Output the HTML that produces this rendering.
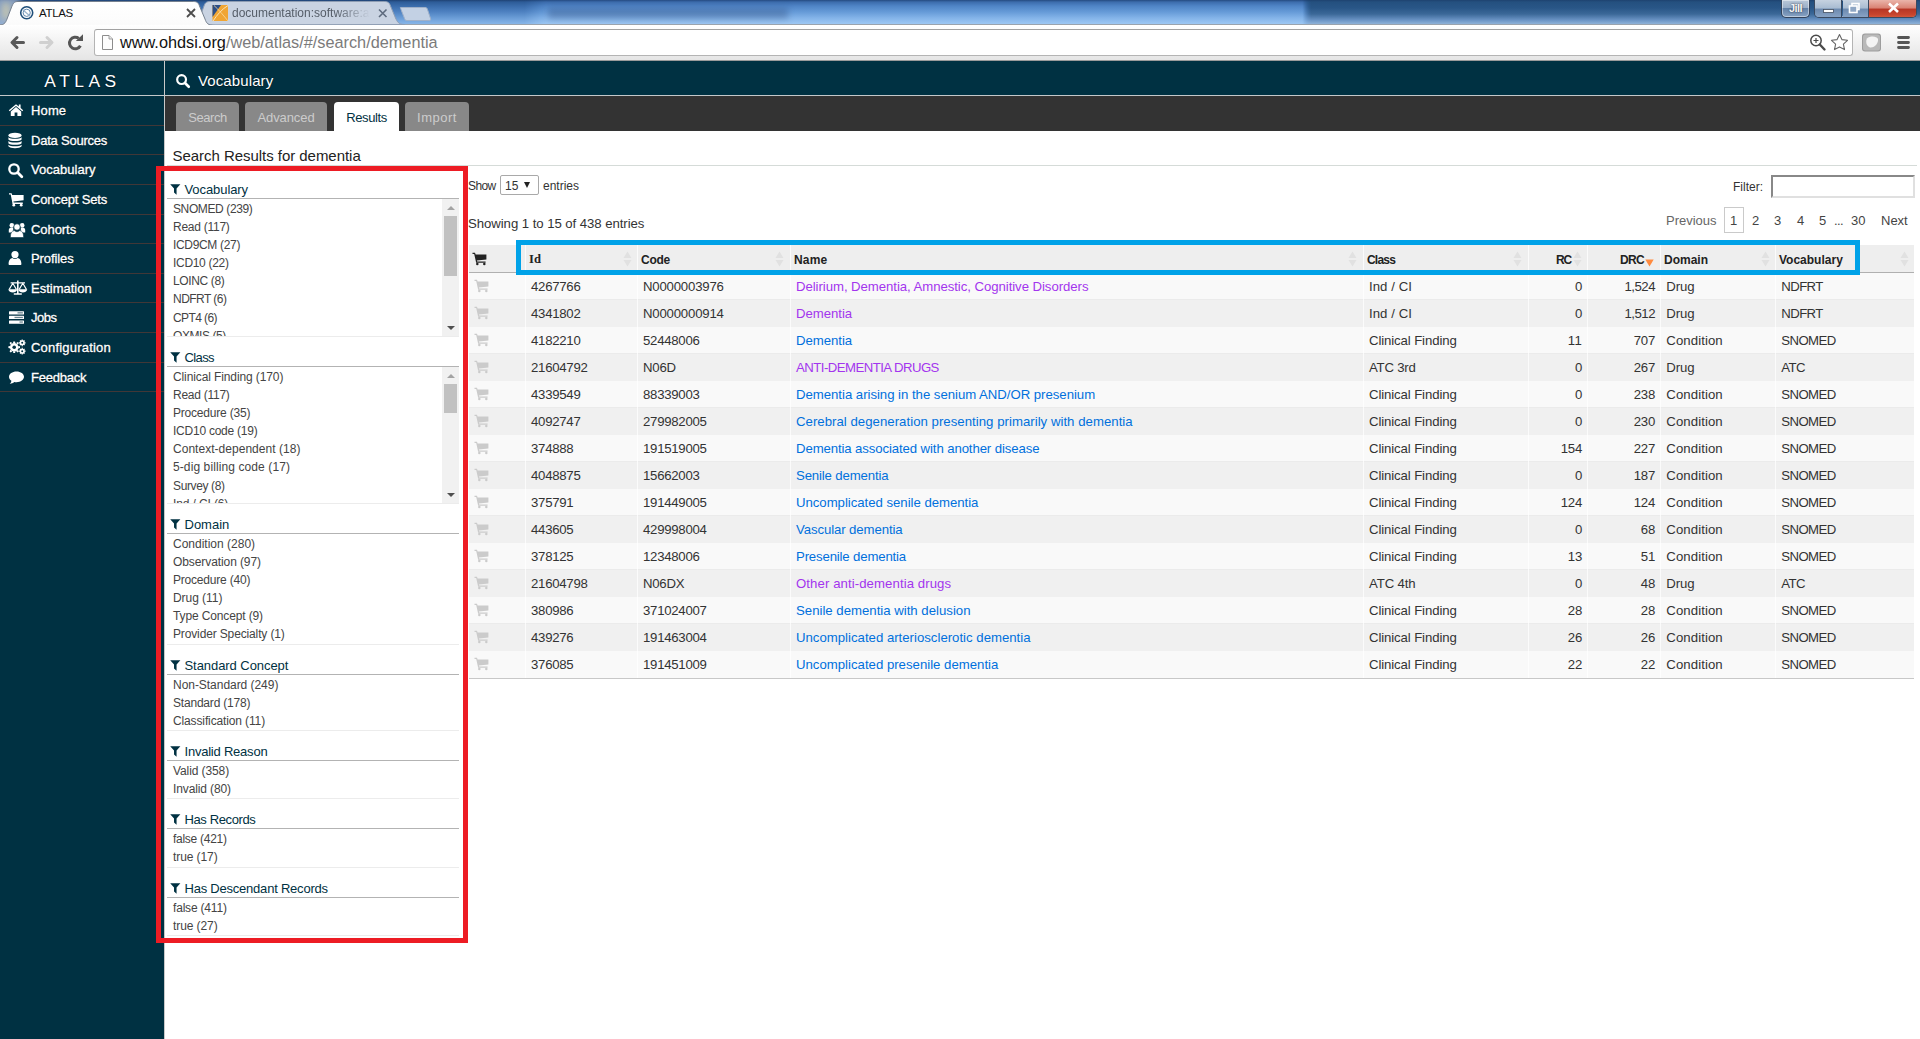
<!DOCTYPE html>
<html lang="en"><head><meta charset="utf-8"><title>ATLAS</title>
<style>
*{box-sizing:border-box}
html,body{margin:0;padding:0}
body{width:1920px;height:1039px;overflow:hidden;position:relative;background:#fff;font-family:"Liberation Sans",sans-serif;color:#333;font-size:13px}
.abs{position:absolute}
svg{display:block}
/* ---------- browser chrome ---------- */
#titlebar{position:absolute;left:0;top:0;width:1920px;height:25px;overflow:hidden;
 background:linear-gradient(to bottom,#1f4273 0px,#2d5c98 2px,#3a6cab 6px,#4f82c2 12px,#6b9dd7 18px,#86b5e8 24px);}
#tbB{position:absolute;left:524px;top:0;width:785px;height:25px;background:linear-gradient(to bottom,#254a80 0px,#3c6cac 2px,#4f84c6 6px,#669bd8 12px,#84b4e9 18px,#9dc7f3 24px);-webkit-mask-image:linear-gradient(to right,transparent 0,#000 22px,#000 778px,transparent 785px);mask-image:linear-gradient(to right,transparent 0,#000 22px,#000 778px,transparent 785px)}
#tbC{position:absolute;left:1303px;top:0;width:617px;height:25px;background:linear-gradient(to bottom,#1e426f 0px,#24507f 2px,#295687 8px,#3b6898 14px,#6a93c4 20px,#8eb2d8 24px);-webkit-mask-image:linear-gradient(to right,transparent 0,#000 8px);mask-image:linear-gradient(to right,transparent 0,#000 8px)}
#titleline{position:absolute;left:0;top:24px;width:1920px;height:1px;background:#9aa3ad}
#toolbar{position:absolute;left:0;top:25px;width:1920px;height:35px;background:linear-gradient(to bottom,#ffffff 0,#f7f7f7 30%,#efefef 60%,#e5e5e5 100%)}
#toolline{position:absolute;left:0;top:60px;width:1920px;height:1px;background:#9b9b9b}
#urlbox{position:absolute;left:94px;top:29px;width:1759px;height:27px;background:#fff;border:1px solid #b4b4b4;border-top-color:#a2a2a2;border-radius:3px}
#urltext{position:absolute;left:120px;top:33px;font-size:16.3px;line-height:19px;color:#7b7b7b;white-space:nowrap}
#urltext b{font-weight:normal;color:#111}
.tabtitle{position:absolute;font-size:12px;line-height:14px;white-space:nowrap}
/* ---------- page ---------- */
#page{position:absolute;left:0;top:61px;width:1920px;height:978px;background:#fff}
#sidebar{position:absolute;left:0;top:0;width:164px;height:978px;background:#003142}
#sideborder{position:absolute;left:164px;top:0;width:1px;height:978px;background:#c9c9c9}
#brand{position:absolute;left:0;top:0;width:164px;height:34px;color:#fff;font-size:17.4px;line-height:41.5px;letter-spacing:4.5px;text-align:center;padding-left:1px;text-shadow:0 1px 2px rgba(0,0,0,.6)}
#brandline{position:absolute;left:0;top:34px;width:1920px;height:1px;background:#c4c8ca}
.nav{position:absolute;left:0;width:164px;height:30px;border-bottom:1px solid #413737;color:#fff;font-size:13px;-webkit-text-stroke:.3px #fff}
.nav span{position:absolute;left:31px;top:0;line-height:29px;white-space:nowrap;text-shadow:0 1px 1px rgba(0,0,0,.5)}
.nav svg{position:absolute;left:7px;top:6px}
#header{position:absolute;left:165px;top:0;width:1755px;height:34px;background:#003142}
#header span{position:absolute;left:33px;top:0;line-height:39px;color:#fff;font-size:15px;text-shadow:0 1px 1px rgba(0,0,0,.5)}
#tabbar{position:absolute;left:165px;top:35px;width:1755px;height:35px;background:#333}
.tab{position:absolute;top:41px;height:29px;background:#888;color:#ccc;border-radius:4px 4px 0 0;font-size:13px;line-height:31px;text-align:center}
.tab.on{background:#fff;color:#003142}
#h3{position:absolute;left:172.5px;top:86px;letter-spacing:-.04px;font-size:15px;line-height:18px;color:#222;white-space:nowrap}
#h3line{position:absolute;left:167px;top:104px;width:1750px;height:1px;background:#d5dbd8}
/* filter panels */
.fh{position:absolute;left:167px;width:292px;height:18px;border-bottom:1px solid #b3b3b3;color:#003142;font-size:13px}
.fh span{position:absolute;left:17.5px;bottom:1px;line-height:15px;white-space:nowrap}
.fh svg{position:absolute;left:3px;bottom:2.700px}
.fl{position:absolute;left:167px;width:292px;border-bottom:1px solid #ececec;overflow:hidden}
.fi{position:absolute;left:6px;font-size:12px;line-height:14px;color:#444;white-space:nowrap}
.sb{position:absolute;right:0;top:0;width:17px;height:100%;background:#f1f1f1}
.sb i{position:absolute;left:2px;width:13px;background:#c1c1c1}
.sb:before{content:"";position:absolute;left:4.500px;top:7px;border:4px solid transparent;border-top:0;border-bottom:4px solid #a3a3a3;width:0;height:0}
.sb:after{content:"";position:absolute;left:4.500px;bottom:6.500px;border:4px solid transparent;border-bottom:0;border-top:4px solid #505050;width:0;height:0}
/* table */
#thead{position:absolute;left:469px;top:184px;width:1445px;height:27px;background:#eee}
#theadline{position:absolute;left:469px;top:211px;width:1445px;height:1px;background:#b0b0b0}
.th{position:absolute;top:184px;height:27px;font-size:12px;font-weight:bold;line-height:31.5px;color:#222;white-space:nowrap}
.row{position:absolute;left:469px;width:1445px;height:27px;overflow:visible;border-top:1px solid #f0f0f0;background:#f9f9f9;font-size:13.2px;line-height:28.3px;color:#333}
.row.e{background:#f0f0f0;border-top-color:#ebebeb}
.row span{position:absolute;top:0;white-space:nowrap}
.row .r{text-align:right}
.row a{color:#0070dd;text-decoration:none}
.row a.v{color:#a335ee}
.vl{position:absolute;top:184px;width:1px;height:433px;background:rgba(255,255,255,.75)}
#tbottom{position:absolute;left:469px;top:617px;width:1445px;height:1px;background:#c8c8c8}
.ctl{position:absolute;font-size:12px;line-height:14px;color:#333;white-space:nowrap}
.pg{position:absolute;top:152px;font-size:13px;line-height:15px;color:#444;white-space:nowrap}
#redbox{position:absolute;left:156px;top:105px;width:312px;height:777px;border:5px solid #ed1c24}
#bluebox{position:absolute;left:516px;top:179px;width:1344px;height:35px;border:5px solid #00a2e8}

</style></head>
<body>
<div id="titlebar"></div>
<div id="tbB"></div><div id="tbC"></div><div class="abs" style="left:548px;top:8px;width:240px;height:11px;background:rgba(35,60,105,.30);filter:blur(3px)"></div><div class="abs" style="left:-6px;top:-4px;width:26px;height:30px;background:rgba(150,170,200,.85);filter:blur(3px)"></div><div class="abs" style="left:2px;top:3px;width:8px;height:16px;background:rgba(200,200,175,.9);filter:blur(3px)"></div>
<div id="titleline"></div>
<svg class="abs" style="left:0;top:0" width="440" height="26" viewBox="0 0 440 26">
  <defs><linearGradient id="tg" x1="0" y1="0" x2="0" y2="1"><stop offset="0" stop-color="#ffffff"/><stop offset="1" stop-color="#fbfbfb"/></linearGradient></defs>
  <path d="M191,25 C197,25 198,22 199.500,18 L204,6 C205,2.500 207,1.500 210,1.500 L384.500,1.500 C387.500,1.500 389.500,2.500 390.500,6 L395.500,18 C397.500,22 398.500,24.500 404.500,24.500 Z" fill="#c9d3e2" stroke="#8e9db3" stroke-width="1"/>
  <path d="M400.500,7.500 L425,7.500 C426.500,7.500 427,8 427.500,9.500 L430.500,18.500 C431,20 430.500,20.500 429,20.500 L407,20.500 C405.500,20.500 405,20 404.500,18.500 L401,9.500 C400.500,8 400,7.500 400.500,7.500 Z" fill="#c3d1e4" stroke="#9fb0c8" stroke-width="1"/>
  <path d="M-4,25.500 C4,25.500 5.500,23 7,19 L12,6 C13.500,2.500 15,1.500 18,1.500 L193.500,1.500 C196.500,1.500 198.500,2.500 199.500,6 L205,19 C206.500,23 207.500,25.500 215.500,25.500 Z" fill="url(#tg)" stroke="#76818f" stroke-width="1"/>
  <rect x="0" y="25" width="217" height="1" fill="#fdfdfd"/>
  <!-- favicon 1 -->
  <circle cx="26.700" cy="12.800" r="6" fill="#fff" stroke="#1f4e79" stroke-width="1.600"/>
  <circle cx="26.700" cy="12.800" r="3.600" fill="none" stroke="#5f86ad" stroke-width="1"/>
  <path d="M22.500,9.500 L30.500,16.500" stroke="#9bb4cc" stroke-width="1.200"/>
  <!-- close 1 -->
  <path d="M187,9 L195,17 M195,9 L187,17" stroke="#4d4d4d" stroke-width="1.800"/>
  <!-- favicon 2 -->
  <rect x="212.500" y="5" width="15.500" height="16" fill="#f0a533"/>
  <path d="M212.500,5 L221,5 L212.500,17 Z" fill="#2d4f86"/>
  <path d="M213,21 C217,15 222,9 228,5.500" stroke="#fbe3b4" stroke-width="1" fill="none"/>
  <path d="M214,5.500 C219,10 224,16 228,21" stroke="#f7d9a0" stroke-width=".8" fill="none"/>
  <!-- close 2 -->
  <path d="M379,9.500 L386.500,17 M386.500,9.500 L379,17" stroke="#5e6b7e" stroke-width="1.600"/>
</svg>
<div class="tabtitle" style="left:39px;top:6px;color:#111;font-size:11.500px;letter-spacing:-.35px">ATLAS</div>
<div class="tabtitle" style="left:232px;top:6px;width:138px;overflow:hidden;color:#555d68;-webkit-mask-image:linear-gradient(to right,#000 75%,transparent 100%);mask-image:linear-gradient(to right,#000 75%,transparent 100%)">documentation:software:atlas</div>
<!-- window buttons -->
<div class="abs" style="left:1781px;top:0;width:29px;height:18px;border:1px solid #33425a;border-top:0;border-radius:0 0 5px 5px;background:linear-gradient(to bottom,#b9c7d8 0,#9cb0c9 45%,#6482a8 50%,#88a3c4 100%);box-shadow:inset 0 0 0 1px rgba(255,255,255,.45)"></div>
<div class="abs" style="left:1789px;top:2px;font-size:11px;line-height:13px;color:#f4f4f4;font-weight:bold;letter-spacing:-.6px;text-shadow:0 0 2px #223">Jill</div>
<div class="abs" style="left:1814px;top:0;width:103px;height:18px;border:1px solid #3b4a60;border-top:0;border-radius:0 0 5px 5px;overflow:hidden;box-shadow:inset 0 0 0 1px rgba(255,255,255,.4)">
  <div class="abs" style="left:0;top:0;width:27px;height:18px;background:linear-gradient(to bottom,#c6d2e0 0,#a9bcd2 45%,#6c89ae 50%,#8ca6c7 100%);border-right:1px solid #3b4a60"></div>
  <div class="abs" style="left:28px;top:0;width:26px;height:18px;background:linear-gradient(to bottom,#c6d2e0 0,#a9bcd2 45%,#6c89ae 50%,#8ca6c7 100%);border-right:1px solid #3b4a60"></div>
  <div class="abs" style="left:54px;top:0;width:49px;height:18px;background:linear-gradient(to bottom,#eab5aa 0,#d98172 45%,#b63625 50%,#c8442d 80%,#d75d3f 100%)"></div>
</div>
<svg class="abs" style="left:1814px;top:0" width="104" height="18" viewBox="0 0 104 18">
  <rect x="9.500" y="9.500" width="10" height="3" fill="#fff" stroke="#444f60" stroke-width=".8"/>
  <rect x="38" y="3.500" width="7" height="6" fill="none" stroke="#fff" stroke-width="1.600"/>
  <rect x="35.500" y="6" width="7.500" height="6.500" fill="#8ea6c4" stroke="#fff" stroke-width="1.600"/>
  <path d="M75,3.500 L84,12 M84,3.500 L75,12" stroke="#fff" stroke-width="2.600"/>
</svg>
<div id="toolbar"></div>
<div id="toolline"></div>
<div id="urlbox"></div>
<svg class="abs" style="left:0;top:25px" width="130" height="35" viewBox="0 0 130 35">
  <!-- back -->
  <path d="M23.500,17.500 L13.500,17.500 M17,12.500 L12,17.500 L17,22.500" fill="none" stroke="#595959" stroke-width="3" stroke-linecap="round" stroke-linejoin="round"/>
  <!-- forward -->
  <path d="M40.500,17.500 L50.500,17.500 M47,12.500 L52,17.500 L47,22.500" fill="none" stroke="#d0d0d0" stroke-width="3" stroke-linecap="round" stroke-linejoin="round"/>
  <!-- reload -->
  <path d="M80.400,20.800 A5.800,5.800 0 1 1 78.800,13.400" fill="none" stroke="#555" stroke-width="3"/>
  <path d="M75.800,16 L83,16 L83,9.200 Z" fill="#555"/>
  <!-- page icon -->
  <path d="M102.500,10.500 L109,10.500 L112.500,14 L112.500,24.500 L102.500,24.500 Z" fill="#fdfdfd" stroke="#8d8d8d" stroke-width="1"/>
  <path d="M109,10.500 L109,14 L112.500,14" fill="#e8e8e8" stroke="#8d8d8d" stroke-width=".8"/>
</svg>
<div id="urltext"><b>www.ohdsi.org</b>/web/atlas/#/search/dementia</div>
<svg class="abs" style="left:1800px;top:25px" width="120" height="35" viewBox="0 0 120 35">
  <!-- zoom -->
  <circle cx="16" cy="15.500" r="5.200" fill="none" stroke="#4a4a4a" stroke-width="1.500"/>
  <path d="M19.800,19.500 L24.500,24.500" stroke="#4a4a4a" stroke-width="2.400" stroke-linecap="round"/>
  <path d="M13.500,15.500 L18.500,15.500 M16,13 L16,18" stroke="#4a4a4a" stroke-width="1.200"/>
  <!-- star -->
  <path d="M39.500,9.500 L41.900,14.600 L47.500,15.300 L43.400,19.100 L44.500,24.600 L39.500,21.900 L34.500,24.600 L35.600,19.100 L31.500,15.300 L37.100,14.600 Z" fill="#fff" stroke="#666" stroke-width="1.100" stroke-linejoin="round"/>
  <!-- ext -->
  <rect x="62" y="8.500" width="19" height="18" rx="3" fill="#9d9d9d"/>
  <rect x="63" y="9.500" width="17" height="16" rx="2.500" fill="#b9b9b9"/>
  <path d="M67,13.500 C70,10.500 77,11 78,14 C78.500,18 75,23 70,22.500 C66,21 65.500,16 67,13.500 Z" fill="#f4f4f4"/>
  <!-- menu -->
  <path d="M98.500,12.500 L108.500,12.500 M98.500,17.500 L108.500,17.500 M98.500,22.500 L108.500,22.500" stroke="#555" stroke-width="2.800" stroke-linecap="round"/>
</svg>

<div id="page">
<div id="sidebar"></div><div id="sideborder"></div>
<div id="brand">ATLAS</div>
<div class="nav" style="top:35px;height:30px"><svg style="left:8px;top:7px" width="16" height="14" viewBox="0 0 16 14"><path d="M8,1.200 L0.800,7.300 L1.700,8.300 L8,3 L14.300,8.300 L15.200,7.300 L12.600,5.100 L12.600,1.600 L10.800,1.600 L10.800,3.600 Z" fill="#fff"/><path d="M8,4 L2.800,8.400 L2.800,13 L6.600,13 L6.600,9.600 L9.400,9.600 L9.400,13 L13.200,13 L13.200,8.400 Z" fill="#fff"/></svg><span style="letter-spacing:0.13px;">Home</span></div>
<div class="nav" style="top:65px;height:29px"><svg style="left:7px;top:6px" width="16" height="17" viewBox="0 0 16 17"><ellipse cx="8" cy="3.400" rx="6.600" ry="2.600" fill="#fff"/><path d="M1.400,5.200 C3,7.200 13,7.200 14.600,5.200 L14.600,7.400 C13,9.600 3,9.600 1.400,7.400 Z M1.400,9 C3,11 13,11 14.600,9 L14.600,11.200 C13,13.400 3,13.400 1.400,11.200 Z M1.400,12.800 C3,14.800 13,14.800 14.600,12.800 L14.600,14.200 C13,16.800 3,16.800 1.400,14.200 Z" fill="#fff"/></svg><span style="letter-spacing:-0.22px;">Data Sources</span></div>
<div class="nav" style="top:94px;height:30px"><svg style="left:7px;top:7px" width="17" height="17" viewBox="0 0 17 17"><circle cx="7" cy="7" r="4.700" fill="none" stroke="#fff" stroke-width="2.300"/><path d="M10.600,10.600 L14.800,14.800" stroke="#fff" stroke-width="2.800" stroke-linecap="round"/></svg><span style="letter-spacing:0.03px;">Vocabulary</span></div>
<div class="nav" style="top:124px;height:30px"><svg style="left:8px;top:7px" width="17" height="15" viewBox="0 0 17 15"><path d="M1,1.200 L3.600,1.200 L4.200,3 L15.600,3 L15.600,8.200 L5.400,9.400 L5.700,10.600 L14.800,10.600 L14.800,12 L4.400,12 L4.400,11 L2.700,2.600 L1,2.600 Z" fill="#fff"/><circle cx="5.800" cy="13.200" r="1.400" fill="#fff"/><circle cx="13.200" cy="13.200" r="1.400" fill="#fff"/></svg><span style="letter-spacing:-0.16px;">Concept Sets</span></div>
<div class="nav" style="top:154px;height:29px"><svg style="left:8px;top:7px" width="18" height="16" viewBox="0 0 18 16"><circle cx="3.800" cy="3.400" r="2.300" fill="#fff"/><circle cx="14.200" cy="3.400" r="2.300" fill="#fff"/><path d="M0.800,10.500 L0.800,8 C0.800,6.500 1.800,5.800 3,5.800 L5.200,5.800 L5.200,10.500 Z M17.200,10.500 L17.200,8 C17.200,6.500 16.200,5.800 15,5.800 L12.800,5.800 L12.800,10.500 Z" fill="#fff"/><circle cx="9" cy="5" r="3.300" fill="#fff" stroke="#003142" stroke-width=".8"/><path d="M3,15.500 C2.600,15.500 2.400,15 2.400,14.500 C2.400,11 4,8.600 6.400,8.600 C7,9.300 8,9.700 9,9.700 C10,9.700 11,9.300 11.600,8.600 C14,8.600 15.600,11 15.600,14.500 C15.600,15 15.400,15.500 15,15.500 Z" fill="#fff" stroke="#003142" stroke-width=".6"/></svg><span style="letter-spacing:-0.06px;">Cohorts</span></div>
<div class="nav" style="top:183px;height:30px"><svg style="left:7px;top:5.5px" width="16" height="16" viewBox="0 0 16 16"><circle cx="8" cy="4.600" r="3.600" fill="#fff"/><path d="M2.600,15 C2,15 1.600,14.600 1.600,14 C1.600,10.500 3.400,8.200 5.400,8 C6.100,8.600 7,9 8,9 C9,9 9.900,8.600 10.600,8 C12.600,8.200 14.400,10.500 14.400,14 C14.400,14.600 14,15 13.400,15 Z" fill="#fff"/></svg><span style="letter-spacing:-0.09px;">Profiles</span></div>
<div class="nav" style="top:213px;height:29px"><svg style="left:8px;top:6px" width="20" height="16" viewBox="0 0 20 16"><path d="M9,0.600 h1.600 v1.700 h6.400 v1.200 h-6.400 v9.700 h3.200 v1.600 h-8 v-1.600 h3.200 v-9.700 h-6.400 v-1.200 h6.400 z" fill="#fff"/><path d="M4.800,3.200 L1.200,9.400 M4.800,3.200 L8.400,9.400 M14.800,3.200 L11.200,9.400 M14.800,3.200 L18.400,9.400" fill="none" stroke="#fff" stroke-width="1.100"/><path d="M0.300,9.300 H9.300 C8.900,11.600 6.800,12.500 4.800,12.500 C2.800,12.500 0.700,11.600 0.300,9.300 Z M10.300,9.300 H19.300 C18.900,11.600 16.800,12.500 14.800,12.500 C12.800,12.500 10.700,11.600 10.300,9.300 Z" fill="#fff"/></svg><span style="">Estimation</span></div>
<div class="nav" style="top:242px;height:30px"><svg style="left:8px;top:6.5px" width="17" height="15" viewBox="0 0 17 15"><rect x="1" y="1.200" width="15" height="3.300" rx=".5" fill="#fff"/><rect x="1" y="5.800" width="15" height="3.300" rx=".5" fill="#fff"/><rect x="1" y="10.400" width="15" height="3.300" rx=".5" fill="#fff"/><rect x="9.500" y="2.200" width="5.400" height="1.300" fill="#6b858f"/><rect x="6.500" y="6.800" width="8.400" height="1.300" fill="#6b858f"/><rect x="11.500" y="11.400" width="3.400" height="1.300" fill="#6b858f"/></svg><span style="letter-spacing:-0.47px;">Jobs</span></div>
<div class="nav" style="top:272px;height:30px"><svg style="left:8px;top:6px" width="18" height="16" viewBox="0 0 18 16"><g fill="#fff"><circle cx="6.200" cy="8.200" r="4.300"/><path d="M5.300,2.400 L7.100,2.400 L7.400,4.200 L5,4.200 Z M5.300,14 L7.100,14 L7.400,12.200 L5,12.200 Z M0.400,7.300 L0.400,9.100 L2.200,9.400 L2.200,7 Z M12,7.300 L12,9.100 L10.200,9.400 L10.200,7 Z M1.500,4.100 L2.700,2.900 L4.200,4 L2.600,5.600 Z M10.900,4.100 L9.700,2.900 L8.200,4 L9.800,5.600 Z M1.500,12.300 L2.700,13.500 L4.200,12.400 L2.600,10.800 Z M10.900,12.300 L9.700,13.500 L8.200,12.400 L9.800,10.800 Z"/><circle cx="14.200" cy="3.800" r="2.500"/><path d="M13.600,0.400 L14.800,0.400 L14.800,7.200 L13.600,7.200 Z M10.800,3.200 L17.600,3.200 L17.600,4.400 L10.800,4.400 Z M11.500,1.900 L12.400,1 L17,5.600 L16.100,6.500 Z M16.100,1 L17,1.900 L12.400,6.500 L11.500,5.600 Z"/><circle cx="14.200" cy="12.200" r="2.500"/><path d="M13.600,8.800 L14.800,8.800 L14.800,15.600 L13.600,15.600 Z M10.800,11.600 L17.600,11.600 L17.600,12.800 L10.800,12.800 Z M11.500,10.300 L12.400,9.400 L17,14 L16.100,14.900 Z M16.100,9.400 L17,10.300 L12.400,14.900 L11.500,14 Z"/></g><circle cx="6.200" cy="8.200" r="1.800" fill="#003142"/><circle cx="14.200" cy="3.800" r="1" fill="#003142"/><circle cx="14.200" cy="12.200" r="1" fill="#003142"/></svg><span style="letter-spacing:0.20px;">Configuration</span></div>
<div class="nav" style="top:302px;height:29px"><svg style="left:8px;top:7px" width="17" height="15" viewBox="0 0 17 15"><path d="M8.500,1.400 C12.700,1.400 16,3.800 16,6.800 C16,9.800 12.700,12.200 8.500,12.200 C7.700,12.200 7,12.100 6.300,12 C5.200,13 3.600,13.700 1.800,13.800 C2.700,13 3.300,12 3.400,10.800 C1.900,9.800 1,8.400 1,6.800 C1,3.800 4.300,1.400 8.500,1.400 Z" fill="#fff"/></svg><span style="letter-spacing:-0.24px;">Feedback</span></div>
<div id="header"><svg class="abs" style="left:10px;top:12px" width="16" height="16" viewBox="0 0 17 17"><circle cx="7" cy="7" r="4.700" fill="none" stroke="#fff" stroke-width="2.300"/><path d="M10.600,10.600 L14.600,14.600" stroke="#fff" stroke-width="2.800" stroke-linecap="round"/></svg><span style="letter-spacing:0.11px;">Vocabulary</span></div>
<div id="brandline"></div>
<div id="tabbar"></div>
<div class="tab" style="left:176px;width:63px;letter-spacing:-0.42px;">Search</div>
<div class="tab" style="left:245px;width:82px;letter-spacing:-0.08px;">Advanced</div>
<div class="tab on" style="left:334px;width:65px;letter-spacing:-0.41px;">Results</div>
<div class="tab" style="left:405px;width:64px;letter-spacing:0.49px;">Import</div>
<div id="h3">Search Results for dementia</div>
<div id="h3line"></div>
<div class="ctl" style="left:468px;top:118px;letter-spacing:-0.58px;">Show</div>
<div class="abs" style="left:500px;top:114px;width:39px;height:20px;border:1px solid #a9a9a9;border-radius:2px;background:#fff"></div>
<div class="ctl" style="left:505px;top:118px">15</div>
<div class="abs" style="left:524px;top:121px;width:0;height:0;border-left:3.500px solid transparent;border-right:3.500px solid transparent;border-top:6px solid #222"></div>
<div class="ctl" style="left:543px;top:118px">entries</div>
<div class="ctl" style="left:1733px;top:119px">Filter:</div>
<div class="abs" style="left:1771px;top:114px;width:144px;height:23px;border:2px solid;border-color:#888 #e0e0e0 #e0e0e0 #888;background:#fff"></div>
<div class="ctl" style="left:468px;top:156px;font-size:13.200px;letter-spacing:-0.06px;">Showing 1 to 15 of 438 entries</div>
<div class="pg" style="left:1666px;color:#666">Previous</div>
<div class="abs" style="left:1724px;top:146px;width:20px;height:26px;border:1px solid #cacaca;background:#fff"></div>
<div class="pg" style="left:1730px">1</div>
<div class="pg" style="left:1752px">2</div>
<div class="pg" style="left:1774px">3</div>
<div class="pg" style="left:1797px">4</div>
<div class="pg" style="left:1819px">5</div>
<div class="pg" style="left:1834px;letter-spacing:-.6px">...</div>
<div class="pg" style="left:1851px">30</div>
<div class="pg" style="left:1881px">Next</div>

<div class="fh" style="top:120px"><svg width="10.600" height="11" viewBox="0 0 10 11" preserveAspectRatio="none"><path d="M0.200,0.300 L9.800,0.300 L6.200,4.600 L6.200,10.800 L3.800,8.600 L3.800,4.600 Z" fill="#003142"/></svg><span style="letter-spacing:-0.08px;">Vocabulary</span></div>
<div class="fl" style="top:138px;height:138px"><div class="fi" style="top:2.9px;letter-spacing:-0.38px;">SNOMED (239)</div><div class="fi" style="top:21.0px;letter-spacing:-0.26px;">Read (117)</div><div class="fi" style="top:39.1px;letter-spacing:-0.33px;">ICD9CM (27)</div><div class="fi" style="top:57.2px;letter-spacing:-0.31px;">ICD10 (22)</div><div class="fi" style="top:75.3px;letter-spacing:-0.37px;">LOINC (8)</div><div class="fi" style="top:93.4px;letter-spacing:-0.54px;">NDFRT (6)</div><div class="fi" style="top:111.5px;letter-spacing:-0.60px;">CPT4 (6)</div><div class="fi" style="top:129.6px;letter-spacing:-0.42px;">OXMIS (5)</div><div class="sb"><i style="top:17px;height:60px"></i></div></div>
<div class="fh" style="top:288px"><svg width="10.600" height="11" viewBox="0 0 10 11" preserveAspectRatio="none"><path d="M0.200,0.300 L9.800,0.300 L6.200,4.600 L6.200,10.800 L3.800,8.600 L3.800,4.600 Z" fill="#003142"/></svg><span style="letter-spacing:-0.60px;">Class</span></div>
<div class="fl" style="top:306px;height:137px"><div class="fi" style="top:2.9px;letter-spacing:-0.11px;">Clinical Finding (170)</div><div class="fi" style="top:21.0px;letter-spacing:-0.26px;">Read (117)</div><div class="fi" style="top:39.1px;letter-spacing:-0.20px;">Procedure (35)</div><div class="fi" style="top:57.2px;letter-spacing:-0.24px;">ICD10 code (19)</div><div class="fi" style="top:75.3px;letter-spacing:0.03px;">Context-dependent (18)</div><div class="fi" style="top:93.4px;letter-spacing:0.10px;">5-dig billing code (17)</div><div class="fi" style="top:111.5px;letter-spacing:-0.37px;">Survey (8)</div><div class="fi" style="top:129.6px;letter-spacing:-0.12px;">Ind / CI (6)</div><div class="sb"><i style="top:17px;height:29px"></i></div></div>
<div class="fh" style="top:455px"><svg width="10.600" height="11" viewBox="0 0 10 11" preserveAspectRatio="none"><path d="M0.200,0.300 L9.800,0.300 L6.200,4.600 L6.200,10.800 L3.800,8.600 L3.800,4.600 Z" fill="#003142"/></svg><span style="">Domain</span></div>
<div class="fl" style="top:473px;height:111px"><div class="fi" style="top:2.9px;">Condition (280)</div><div class="fi" style="top:21.0px;letter-spacing:-0.09px;">Observation (97)</div><div class="fi" style="top:39.1px;letter-spacing:-0.20px;">Procedure (40)</div><div class="fi" style="top:57.2px;letter-spacing:-0.05px;">Drug (11)</div><div class="fi" style="top:75.3px;letter-spacing:-0.13px;">Type Concept (9)</div><div class="fi" style="top:93.4px;letter-spacing:-0.14px;">Provider Specialty (1)</div></div>
<div class="fh" style="top:596px"><svg width="10.600" height="11" viewBox="0 0 10 11" preserveAspectRatio="none"><path d="M0.200,0.300 L9.800,0.300 L6.200,4.600 L6.200,10.800 L3.800,8.600 L3.800,4.600 Z" fill="#003142"/></svg><span style="letter-spacing:-0.06px;">Standard Concept</span></div>
<div class="fl" style="top:614px;height:56px"><div class="fi" style="top:2.8px;letter-spacing:-0.04px;">Non-Standard (249)</div><div class="fi" style="top:20.9px;letter-spacing:-0.20px;">Standard (178)</div><div class="fi" style="top:39.0px;letter-spacing:-0.13px;">Classification (11)</div></div>
<div class="fh" style="top:682px"><svg width="10.600" height="11" viewBox="0 0 10 11" preserveAspectRatio="none"><path d="M0.200,0.300 L9.800,0.300 L6.200,4.600 L6.200,10.800 L3.800,8.600 L3.800,4.600 Z" fill="#003142"/></svg><span style="letter-spacing:-0.22px;">Invalid Reason</span></div>
<div class="fl" style="top:700px;height:38px"><div class="fi" style="top:2.8px;letter-spacing:-0.10px;">Valid (358)</div><div class="fi" style="top:20.9px;letter-spacing:-0.12px;">Invalid (80)</div></div>
<div class="fh" style="top:750px"><svg width="10.600" height="11" viewBox="0 0 10 11" preserveAspectRatio="none"><path d="M0.200,0.300 L9.800,0.300 L6.200,4.600 L6.200,10.800 L3.800,8.600 L3.800,4.600 Z" fill="#003142"/></svg><span style="letter-spacing:-0.38px;">Has Records</span></div>
<div class="fl" style="top:768px;height:39px"><div class="fi" style="top:2.7px;letter-spacing:-0.27px;">false (421)</div><div class="fi" style="top:20.8px;letter-spacing:-0.09px;">true (17)</div></div>
<div class="fh" style="top:819px"><svg width="10.600" height="11" viewBox="0 0 10 11" preserveAspectRatio="none"><path d="M0.200,0.300 L9.800,0.300 L6.200,4.600 L6.200,10.800 L3.800,8.600 L3.800,4.600 Z" fill="#003142"/></svg><span style="letter-spacing:-0.22px;">Has Descendant Records</span></div>
<div class="fl" style="top:837px;height:38px"><div class="fi" style="top:2.8px;letter-spacing:-0.19px;">false (411)</div><div class="fi" style="top:20.9px;letter-spacing:-0.09px;">true (27)</div></div>
<div id="thead"></div><div id="theadline"></div>
<svg class="abs" style="left:472px;top:191px" width="15" height="14" viewBox="0 0 15 14" fill="#222"><path d="M0.500,0.800 L3,0.800 L3.600,2.600 L14.400,2.600 L14.400,7.400 L4.900,8.500 L5.200,9.600 L13.600,9.600 L13.600,10.800 L4,10.800 L4,10 L2.200,2 L0.500,2 Z"/><circle cx="5.300" cy="11.900" r="1.250"/><circle cx="12.300" cy="11.900" r="1.250"/></svg>
<div class="th" style="left:529px;font-family:'Liberation Serif',serif;font-size:12.600px;margin-top:-1px;">Id</div>
<div class="th" style="left:641px;letter-spacing:-0.25px;">Code</div>
<div class="th" style="left:794px;letter-spacing:0.15px;">Name</div>
<div class="th" style="left:1367px;letter-spacing:-0.80px;">Class</div>
<div class="th" style="left:1556px;letter-spacing:-1.17px;">RC</div>
<div class="th" style="left:1620px;letter-spacing:-0.67px;">DRC</div>
<div class="th" style="left:1664px;">Domain</div>
<div class="th" style="left:1779px;">Vocabulary</div>
<svg class="abs" style="left:622.5px;top:190px" width="9" height="16" viewBox="0 0 9 16"><path d="M4.500,0.500 L8.500,7 L0.500,7 Z M4.500,15.500 L8.500,9 L0.500,9 Z" fill="#e1e1e1"/></svg>
<svg class="abs" style="left:774.5px;top:190px" width="9" height="16" viewBox="0 0 9 16"><path d="M4.500,0.500 L8.500,7 L0.500,7 Z M4.500,15.500 L8.500,9 L0.500,9 Z" fill="#e1e1e1"/></svg>
<svg class="abs" style="left:1347.5px;top:190px" width="9" height="16" viewBox="0 0 9 16"><path d="M4.500,0.500 L8.500,7 L0.500,7 Z M4.500,15.500 L8.500,9 L0.500,9 Z" fill="#e1e1e1"/></svg>
<svg class="abs" style="left:1512.5px;top:190px" width="9" height="16" viewBox="0 0 9 16"><path d="M4.500,0.500 L8.500,7 L0.500,7 Z M4.500,15.500 L8.500,9 L0.500,9 Z" fill="#e1e1e1"/></svg>
<svg class="abs" style="left:1572.5px;top:190px" width="9" height="16" viewBox="0 0 9 16"><path d="M4.500,0.500 L8.500,7 L0.500,7 Z M4.500,15.500 L8.500,9 L0.500,9 Z" fill="#e1e1e1"/></svg>
<svg class="abs" style="left:1760.5px;top:190px" width="9" height="16" viewBox="0 0 9 16"><path d="M4.500,0.500 L8.500,7 L0.500,7 Z M4.500,15.500 L8.500,9 L0.500,9 Z" fill="#e1e1e1"/></svg>
<svg class="abs" style="left:1899.5px;top:190px" width="9" height="16" viewBox="0 0 9 16"><path d="M4.500,0.500 L8.500,7 L0.500,7 Z M4.500,15.500 L8.500,9 L0.500,9 Z" fill="#e1e1e1"/></svg>
<svg class="abs" style="left:1645px;top:198px" width="9" height="8" viewBox="0 0 9 8"><path d="M0.300,0.500 L8.700,0.500 L4.500,7.500 Z" fill="#ff8b40"/></svg>
<div class="row" style="top:212px;height:26px;border-top:0;"><svg class="abs" style="left:4.500px;top:6px" width="15" height="14" viewBox="0 0 15 14" fill="#cbcbcb"><path d="M0.500,0.800 L3,0.800 L3.600,2.600 L14.400,2.600 L14.400,7.400 L4.900,8.500 L5.200,9.600 L13.600,9.600 L13.600,10.800 L4,10.800 L4,10 L2.200,2 L0.500,2 Z"/><circle cx="5.300" cy="11.900" r="1.250"/><circle cx="12.300" cy="11.900" r="1.250"/></svg><span style="top:0px;left:62px;letter-spacing:-0.27px;">4267766</span><span style="top:0px;left:174px;letter-spacing:-0.20px;">N0000003976</span><span style="top:0px;left:327px;letter-spacing:-0.06px;"><a class="v">Delirium, Dementia, Amnestic, Cognitive Disorders</a></span><span style="top:0px;left:900px;letter-spacing:0.06px;">Ind / CI</span><span class="r" style="top:0px;left:1053px;width:60px;letter-spacing:-0.27px;">0</span><span class="r" style="top:0px;left:1126px;width:60px;letter-spacing:-0.49px;">1,524</span><span style="top:0px;left:1197.3px;letter-spacing:-0.13px;">Drug</span><span style="top:0px;left:1312.3px;letter-spacing:-0.60px;">NDFRT</span></div>
<div class="row e" style="top:238px;height:27px;"><svg class="abs" style="left:4.500px;top:6px" width="15" height="14" viewBox="0 0 15 14" fill="#cbcbcb"><path d="M0.500,0.800 L3,0.800 L3.600,2.600 L14.400,2.600 L14.400,7.400 L4.900,8.500 L5.200,9.600 L13.600,9.600 L13.600,10.800 L4,10.800 L4,10 L2.200,2 L0.500,2 Z"/><circle cx="5.300" cy="11.900" r="1.250"/><circle cx="12.300" cy="11.900" r="1.250"/></svg><span style="top:0px;left:62px;letter-spacing:-0.27px;">4341802</span><span style="top:0px;left:174px;letter-spacing:-0.20px;">N0000000914</span><span style="top:0px;left:327px;letter-spacing:-0.04px;"><a class="v">Dementia</a></span><span style="top:0px;left:900px;letter-spacing:0.06px;">Ind / CI</span><span class="r" style="top:0px;left:1053px;width:60px;letter-spacing:-0.27px;">0</span><span class="r" style="top:0px;left:1126px;width:60px;letter-spacing:-0.49px;">1,512</span><span style="top:0px;left:1197.3px;letter-spacing:-0.13px;">Drug</span><span style="top:0px;left:1312.3px;letter-spacing:-0.60px;">NDFRT</span></div>
<div class="row" style="top:265px;height:27px;"><svg class="abs" style="left:4.500px;top:6px" width="15" height="14" viewBox="0 0 15 14" fill="#cbcbcb"><path d="M0.500,0.800 L3,0.800 L3.600,2.600 L14.400,2.600 L14.400,7.400 L4.900,8.500 L5.200,9.600 L13.600,9.600 L13.600,10.800 L4,10.800 L4,10 L2.200,2 L0.500,2 Z"/><circle cx="5.300" cy="11.900" r="1.250"/><circle cx="12.300" cy="11.900" r="1.250"/></svg><span style="top:0px;left:62px;letter-spacing:-0.27px;">4182210</span><span style="top:0px;left:174px;letter-spacing:-0.27px;">52448006</span><span style="top:0px;left:327px;letter-spacing:-0.04px;"><a>Dementia</a></span><span style="top:0px;left:900px;letter-spacing:-0.11px;">Clinical Finding</span><span class="r" style="top:0px;left:1053px;width:60px;letter-spacing:0.22px;">11</span><span class="r" style="top:0px;left:1126px;width:60px;letter-spacing:-0.27px;">707</span><span style="top:0px;left:1197.3px;letter-spacing:0.08px;">Condition</span><span style="top:0px;left:1312.3px;letter-spacing:-0.60px;">SNOMED</span></div>
<div class="row e" style="top:292px;height:27px;"><svg class="abs" style="left:4.500px;top:6px" width="15" height="14" viewBox="0 0 15 14" fill="#cbcbcb"><path d="M0.500,0.800 L3,0.800 L3.600,2.600 L14.400,2.600 L14.400,7.400 L4.900,8.500 L5.200,9.600 L13.600,9.600 L13.600,10.800 L4,10.800 L4,10 L2.200,2 L0.500,2 Z"/><circle cx="5.300" cy="11.900" r="1.250"/><circle cx="12.300" cy="11.900" r="1.250"/></svg><span style="top:0px;left:62px;letter-spacing:-0.27px;">21604792</span><span style="top:0px;left:174px;letter-spacing:-0.21px;">N06D</span><span style="top:0px;left:327px;letter-spacing:-0.54px;"><a class="v">ANTI-DEMENTIA DRUGS</a></span><span style="top:0px;left:900px;letter-spacing:-0.22px;">ATC 3rd</span><span class="r" style="top:0px;left:1053px;width:60px;letter-spacing:-0.27px;">0</span><span class="r" style="top:0px;left:1126px;width:60px;letter-spacing:-0.27px;">267</span><span style="top:0px;left:1197.3px;letter-spacing:-0.13px;">Drug</span><span style="top:0px;left:1312.3px;letter-spacing:-0.60px;">ATC</span></div>
<div class="row" style="top:319px;height:27px;"><svg class="abs" style="left:4.500px;top:6px" width="15" height="14" viewBox="0 0 15 14" fill="#cbcbcb"><path d="M0.500,0.800 L3,0.800 L3.600,2.600 L14.400,2.600 L14.400,7.400 L4.900,8.500 L5.200,9.600 L13.600,9.600 L13.600,10.800 L4,10.800 L4,10 L2.200,2 L0.500,2 Z"/><circle cx="5.300" cy="11.900" r="1.250"/><circle cx="12.300" cy="11.900" r="1.250"/></svg><span style="top:0px;left:62px;letter-spacing:-0.27px;">4339549</span><span style="top:0px;left:174px;letter-spacing:-0.27px;">88339003</span><span style="top:0px;left:327px;letter-spacing:-0.03px;"><a>Dementia arising in the senium AND/OR presenium</a></span><span style="top:0px;left:900px;letter-spacing:-0.11px;">Clinical Finding</span><span class="r" style="top:0px;left:1053px;width:60px;letter-spacing:-0.27px;">0</span><span class="r" style="top:0px;left:1126px;width:60px;letter-spacing:-0.27px;">238</span><span style="top:0px;left:1197.3px;letter-spacing:0.08px;">Condition</span><span style="top:0px;left:1312.3px;letter-spacing:-0.60px;">SNOMED</span></div>
<div class="row e" style="top:346px;height:27px;"><svg class="abs" style="left:4.500px;top:6px" width="15" height="14" viewBox="0 0 15 14" fill="#cbcbcb"><path d="M0.500,0.800 L3,0.800 L3.600,2.600 L14.400,2.600 L14.400,7.400 L4.900,8.500 L5.200,9.600 L13.600,9.600 L13.600,10.800 L4,10.800 L4,10 L2.200,2 L0.500,2 Z"/><circle cx="5.300" cy="11.900" r="1.250"/><circle cx="12.300" cy="11.900" r="1.250"/></svg><span style="top:0px;left:62px;letter-spacing:-0.27px;">4092747</span><span style="top:0px;left:174px;letter-spacing:-0.27px;">279982005</span><span style="top:0px;left:327px;letter-spacing:0.03px;"><a>Cerebral degeneration presenting primarily with dementia</a></span><span style="top:0px;left:900px;letter-spacing:-0.11px;">Clinical Finding</span><span class="r" style="top:0px;left:1053px;width:60px;letter-spacing:-0.27px;">0</span><span class="r" style="top:0px;left:1126px;width:60px;letter-spacing:-0.27px;">230</span><span style="top:0px;left:1197.3px;letter-spacing:0.08px;">Condition</span><span style="top:0px;left:1312.3px;letter-spacing:-0.60px;">SNOMED</span></div>
<div class="row" style="top:373px;height:27px;"><svg class="abs" style="left:4.500px;top:6px" width="15" height="14" viewBox="0 0 15 14" fill="#cbcbcb"><path d="M0.500,0.800 L3,0.800 L3.600,2.600 L14.400,2.600 L14.400,7.400 L4.900,8.500 L5.200,9.600 L13.600,9.600 L13.600,10.800 L4,10.800 L4,10 L2.200,2 L0.500,2 Z"/><circle cx="5.300" cy="11.900" r="1.250"/><circle cx="12.300" cy="11.900" r="1.250"/></svg><span style="top:0px;left:62px;letter-spacing:-0.27px;">374888</span><span style="top:0px;left:174px;letter-spacing:-0.27px;">191519005</span><span style="top:0px;left:327px;letter-spacing:-0.11px;"><a>Dementia associated with another disease</a></span><span style="top:0px;left:900px;letter-spacing:-0.11px;">Clinical Finding</span><span class="r" style="top:0px;left:1053px;width:60px;letter-spacing:-0.27px;">154</span><span class="r" style="top:0px;left:1126px;width:60px;letter-spacing:-0.27px;">227</span><span style="top:0px;left:1197.3px;letter-spacing:0.08px;">Condition</span><span style="top:0px;left:1312.3px;letter-spacing:-0.60px;">SNOMED</span></div>
<div class="row e" style="top:400px;height:27px;"><svg class="abs" style="left:4.500px;top:6px" width="15" height="14" viewBox="0 0 15 14" fill="#cbcbcb"><path d="M0.500,0.800 L3,0.800 L3.600,2.600 L14.400,2.600 L14.400,7.400 L4.900,8.500 L5.200,9.600 L13.600,9.600 L13.600,10.800 L4,10.800 L4,10 L2.200,2 L0.500,2 Z"/><circle cx="5.300" cy="11.900" r="1.250"/><circle cx="12.300" cy="11.900" r="1.250"/></svg><span style="top:0px;left:62px;letter-spacing:-0.27px;">4048875</span><span style="top:0px;left:174px;letter-spacing:-0.27px;">15662003</span><span style="top:0px;left:327px;letter-spacing:-0.14px;"><a>Senile dementia</a></span><span style="top:0px;left:900px;letter-spacing:-0.11px;">Clinical Finding</span><span class="r" style="top:0px;left:1053px;width:60px;letter-spacing:-0.27px;">0</span><span class="r" style="top:0px;left:1126px;width:60px;letter-spacing:-0.27px;">187</span><span style="top:0px;left:1197.3px;letter-spacing:0.08px;">Condition</span><span style="top:0px;left:1312.3px;letter-spacing:-0.60px;">SNOMED</span></div>
<div class="row" style="top:427px;height:27px;"><svg class="abs" style="left:4.500px;top:6px" width="15" height="14" viewBox="0 0 15 14" fill="#cbcbcb"><path d="M0.500,0.800 L3,0.800 L3.600,2.600 L14.400,2.600 L14.400,7.400 L4.900,8.500 L5.200,9.600 L13.600,9.600 L13.600,10.800 L4,10.800 L4,10 L2.200,2 L0.500,2 Z"/><circle cx="5.300" cy="11.900" r="1.250"/><circle cx="12.300" cy="11.900" r="1.250"/></svg><span style="top:0px;left:62px;letter-spacing:-0.27px;">375791</span><span style="top:0px;left:174px;letter-spacing:-0.27px;">191449005</span><span style="top:0px;left:327px;letter-spacing:-0.03px;"><a>Uncomplicated senile dementia</a></span><span style="top:0px;left:900px;letter-spacing:-0.11px;">Clinical Finding</span><span class="r" style="top:0px;left:1053px;width:60px;letter-spacing:-0.27px;">124</span><span class="r" style="top:0px;left:1126px;width:60px;letter-spacing:-0.27px;">124</span><span style="top:0px;left:1197.3px;letter-spacing:0.08px;">Condition</span><span style="top:0px;left:1312.3px;letter-spacing:-0.60px;">SNOMED</span></div>
<div class="row e" style="top:454px;height:27px;"><svg class="abs" style="left:4.500px;top:6px" width="15" height="14" viewBox="0 0 15 14" fill="#cbcbcb"><path d="M0.500,0.800 L3,0.800 L3.600,2.600 L14.400,2.600 L14.400,7.400 L4.900,8.500 L5.200,9.600 L13.600,9.600 L13.600,10.800 L4,10.800 L4,10 L2.200,2 L0.500,2 Z"/><circle cx="5.300" cy="11.900" r="1.250"/><circle cx="12.300" cy="11.900" r="1.250"/></svg><span style="top:0px;left:62px;letter-spacing:-0.27px;">443605</span><span style="top:0px;left:174px;letter-spacing:-0.27px;">429998004</span><span style="top:0px;left:327px;letter-spacing:-0.10px;"><a>Vascular dementia</a></span><span style="top:0px;left:900px;letter-spacing:-0.11px;">Clinical Finding</span><span class="r" style="top:0px;left:1053px;width:60px;letter-spacing:-0.27px;">0</span><span class="r" style="top:0px;left:1126px;width:60px;letter-spacing:-0.27px;">68</span><span style="top:0px;left:1197.3px;letter-spacing:0.08px;">Condition</span><span style="top:0px;left:1312.3px;letter-spacing:-0.60px;">SNOMED</span></div>
<div class="row" style="top:481px;height:27px;"><svg class="abs" style="left:4.500px;top:6px" width="15" height="14" viewBox="0 0 15 14" fill="#cbcbcb"><path d="M0.500,0.800 L3,0.800 L3.600,2.600 L14.400,2.600 L14.400,7.400 L4.900,8.500 L5.200,9.600 L13.600,9.600 L13.600,10.800 L4,10.800 L4,10 L2.200,2 L0.500,2 Z"/><circle cx="5.300" cy="11.900" r="1.250"/><circle cx="12.300" cy="11.900" r="1.250"/></svg><span style="top:0px;left:62px;letter-spacing:-0.27px;">378125</span><span style="top:0px;left:174px;letter-spacing:-0.27px;">12348006</span><span style="top:0px;left:327px;letter-spacing:-0.16px;"><a>Presenile dementia</a></span><span style="top:0px;left:900px;letter-spacing:-0.11px;">Clinical Finding</span><span class="r" style="top:0px;left:1053px;width:60px;letter-spacing:-0.27px;">13</span><span class="r" style="top:0px;left:1126px;width:60px;letter-spacing:-0.27px;">51</span><span style="top:0px;left:1197.3px;letter-spacing:0.08px;">Condition</span><span style="top:0px;left:1312.3px;letter-spacing:-0.60px;">SNOMED</span></div>
<div class="row e" style="top:508px;height:27px;"><svg class="abs" style="left:4.500px;top:6px" width="15" height="14" viewBox="0 0 15 14" fill="#cbcbcb"><path d="M0.500,0.800 L3,0.800 L3.600,2.600 L14.400,2.600 L14.400,7.400 L4.900,8.500 L5.200,9.600 L13.600,9.600 L13.600,10.800 L4,10.800 L4,10 L2.200,2 L0.500,2 Z"/><circle cx="5.300" cy="11.900" r="1.250"/><circle cx="12.300" cy="11.900" r="1.250"/></svg><span style="top:0px;left:62px;letter-spacing:-0.27px;">21604798</span><span style="top:0px;left:174px;letter-spacing:-0.25px;">N06DX</span><span style="top:0px;left:327px;letter-spacing:0.08px;"><a class="v">Other anti-dementia drugs</a></span><span style="top:0px;left:900px;letter-spacing:-0.12px;">ATC 4th</span><span class="r" style="top:0px;left:1053px;width:60px;letter-spacing:-0.27px;">0</span><span class="r" style="top:0px;left:1126px;width:60px;letter-spacing:-0.27px;">48</span><span style="top:0px;left:1197.3px;letter-spacing:-0.13px;">Drug</span><span style="top:0px;left:1312.3px;letter-spacing:-0.60px;">ATC</span></div>
<div class="row" style="top:535px;height:27px;"><svg class="abs" style="left:4.500px;top:6px" width="15" height="14" viewBox="0 0 15 14" fill="#cbcbcb"><path d="M0.500,0.800 L3,0.800 L3.600,2.600 L14.400,2.600 L14.400,7.400 L4.900,8.500 L5.200,9.600 L13.600,9.600 L13.600,10.800 L4,10.800 L4,10 L2.200,2 L0.500,2 Z"/><circle cx="5.300" cy="11.900" r="1.250"/><circle cx="12.300" cy="11.900" r="1.250"/></svg><span style="top:0px;left:62px;letter-spacing:-0.27px;">380986</span><span style="top:0px;left:174px;letter-spacing:-0.27px;">371024007</span><span style="top:0px;left:327px;"><a>Senile dementia with delusion</a></span><span style="top:0px;left:900px;letter-spacing:-0.11px;">Clinical Finding</span><span class="r" style="top:0px;left:1053px;width:60px;letter-spacing:-0.27px;">28</span><span class="r" style="top:0px;left:1126px;width:60px;letter-spacing:-0.27px;">28</span><span style="top:0px;left:1197.3px;letter-spacing:0.08px;">Condition</span><span style="top:0px;left:1312.3px;letter-spacing:-0.60px;">SNOMED</span></div>
<div class="row e" style="top:562px;height:27px;"><svg class="abs" style="left:4.500px;top:6px" width="15" height="14" viewBox="0 0 15 14" fill="#cbcbcb"><path d="M0.500,0.800 L3,0.800 L3.600,2.600 L14.400,2.600 L14.400,7.400 L4.900,8.500 L5.200,9.600 L13.600,9.600 L13.600,10.800 L4,10.800 L4,10 L2.200,2 L0.500,2 Z"/><circle cx="5.300" cy="11.900" r="1.250"/><circle cx="12.300" cy="11.900" r="1.250"/></svg><span style="top:0px;left:62px;letter-spacing:-0.27px;">439276</span><span style="top:0px;left:174px;letter-spacing:-0.27px;">191463004</span><span style="top:0px;left:327px;"><a>Uncomplicated arteriosclerotic dementia</a></span><span style="top:0px;left:900px;letter-spacing:-0.11px;">Clinical Finding</span><span class="r" style="top:0px;left:1053px;width:60px;letter-spacing:-0.27px;">26</span><span class="r" style="top:0px;left:1126px;width:60px;letter-spacing:-0.27px;">26</span><span style="top:0px;left:1197.3px;letter-spacing:0.08px;">Condition</span><span style="top:0px;left:1312.3px;letter-spacing:-0.60px;">SNOMED</span></div>
<div class="row" style="top:589px;height:28px;"><svg class="abs" style="left:4.500px;top:6px" width="15" height="14" viewBox="0 0 15 14" fill="#cbcbcb"><path d="M0.500,0.800 L3,0.800 L3.600,2.600 L14.400,2.600 L14.400,7.400 L4.900,8.500 L5.200,9.600 L13.600,9.600 L13.600,10.800 L4,10.800 L4,10 L2.200,2 L0.500,2 Z"/><circle cx="5.300" cy="11.900" r="1.250"/><circle cx="12.300" cy="11.900" r="1.250"/></svg><span style="top:0px;left:62px;letter-spacing:-0.27px;">376085</span><span style="top:0px;left:174px;letter-spacing:-0.27px;">191451009</span><span style="top:0px;left:327px;"><a>Uncomplicated presenile dementia</a></span><span style="top:0px;left:900px;letter-spacing:-0.11px;">Clinical Finding</span><span class="r" style="top:0px;left:1053px;width:60px;letter-spacing:-0.27px;">22</span><span class="r" style="top:0px;left:1126px;width:60px;letter-spacing:-0.27px;">22</span><span style="top:0px;left:1197.3px;letter-spacing:0.08px;">Condition</span><span style="top:0px;left:1312.3px;letter-spacing:-0.60px;">SNOMED</span></div>
<div class="vl" style="left:525px"></div>
<div class="vl" style="left:637px"></div>
<div class="vl" style="left:790px"></div>
<div class="vl" style="left:1363px"></div>
<div class="vl" style="left:1528px"></div>
<div class="vl" style="left:1587px"></div>
<div class="vl" style="left:1660px"></div>
<div class="vl" style="left:1775px"></div>
<div id="tbottom"></div>
<div id="redbox"></div>
<div id="bluebox"></div>
</div>
</body></html>
